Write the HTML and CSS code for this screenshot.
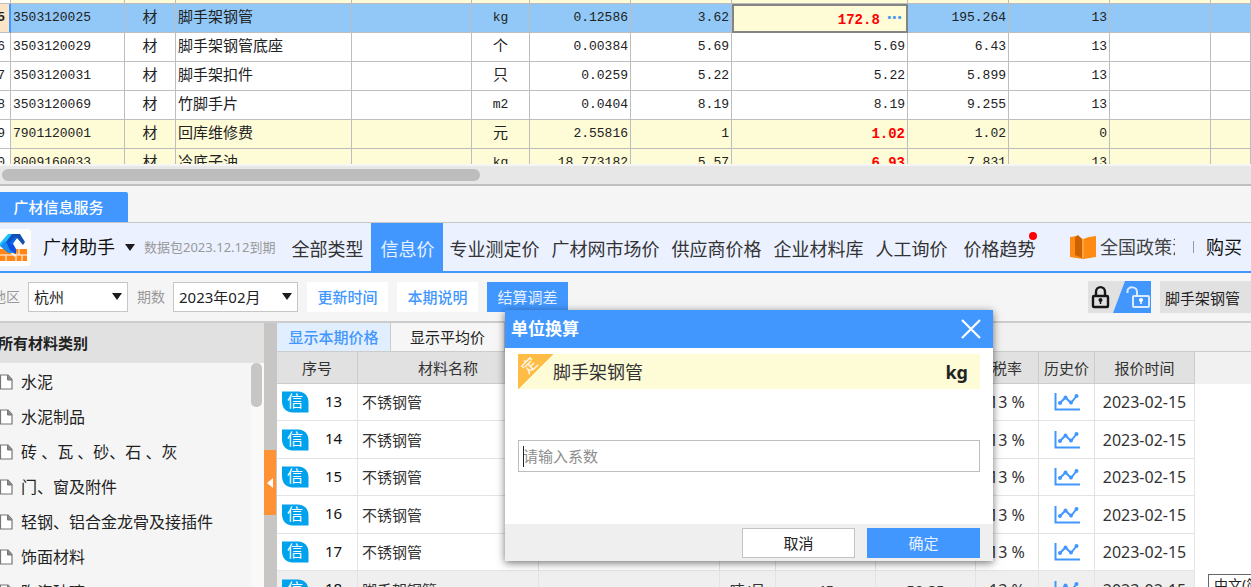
FILE: index.html
```html
<!DOCTYPE html>
<html lang="zh-CN">
<head>
<meta charset="utf-8">
<title>广材助手</title>
<link rel="stylesheet" href="styles.css">
</head>
<body>
<svg class="defs" aria-hidden="true">
  <symbol id="i-xin" viewBox="0 0 28 22"><path d="M1 0.500H17C24 1 27.500 5 27.500 12V21.500H11C4 21 1 16 1 10Z" fill="#00a2ee"/></symbol>
  <symbol id="i-chart" viewBox="0 0 26 20"><path d="M1.500 1V17.500H26" fill="none" stroke="#4297ff" stroke-width="2"/><path d="M6 11L11.500 5.500L17 11L22.500 4" fill="none" stroke="#4297ff" stroke-width="2"/><g fill="#4297ff"><circle cx="6" cy="11" r="2"/><circle cx="11.500" cy="5.500" r="2"/><circle cx="17" cy="10.500" r="2"/><circle cx="22.500" cy="4" r="2"/></g></symbol>
  <symbol id="i-doc" viewBox="0 0 13 16"><path d="M0.500 1H8L12 5.500V15H0.500Z" fill="#fff" stroke="#777" stroke-width="1.200"/><path d="M7.500 1V6H12" fill="#888" stroke="#777"/></symbol>
</svg>

<section class="sheet">
  <table class="grid">
    <colgroup><col class="w-no"><col class="w-code"><col class="w-kind"><col class="w-name"><col class="w-spec"><col class="w-unit"><col class="w-num"><col class="w-num"><col class="w-market"><col class="w-num"><col class="w-num"><col class="w-num"><col></colgroup>
    <tbody>
      <tr class="hl"><td></td><td></td><td></td><td></td><td></td><td></td><td></td><td></td><td></td><td></td><td></td><td></td><td></td></tr>
      <tr class="sel"><td class="no"><span><b>15</b></span></td><td>3503120025</td><td class="c">材</td><td class="zh">脚手架钢管</td><td></td><td class="c u">kg</td><td class="r">0.12586</td><td class="r">3.62</td><td class="r edit"><b>172.8</b><button class="more" aria-label="更多">···</button></td><td class="r">195.264</td><td class="r">13</td><td></td><td></td></tr>
      <tr><td class="no"><span>16</span></td><td>3503120029</td><td class="c">材</td><td class="zh">脚手架钢管底座</td><td></td><td class="c">个</td><td class="r">0.00384</td><td class="r">5.69</td><td class="r">5.69</td><td class="r">6.43</td><td class="r">13</td><td></td><td></td></tr>
      <tr><td class="no"><span>17</span></td><td>3503120031</td><td class="c">材</td><td class="zh">脚手架扣件</td><td></td><td class="c">只</td><td class="r">0.0259</td><td class="r">5.22</td><td class="r">5.22</td><td class="r">5.899</td><td class="r">13</td><td></td><td></td></tr>
      <tr><td class="no"><span>18</span></td><td>3503120069</td><td class="c">材</td><td class="zh">竹脚手片</td><td></td><td class="c u">m2</td><td class="r">0.0404</td><td class="r">8.19</td><td class="r">8.19</td><td class="r">9.255</td><td class="r">13</td><td></td><td></td></tr>
      <tr class="hl"><td class="no"><span>19</span></td><td>7901120001</td><td class="c">材</td><td class="zh">回库维修费</td><td></td><td class="c">元</td><td class="r">2.55816</td><td class="r">1</td><td class="r red">1.02</td><td class="r">1.02</td><td class="r">0</td><td></td><td></td></tr>
      <tr class="hl"><td class="no"><span>20</span></td><td>8009160033</td><td class="c">材</td><td class="zh">冷底子油</td><td></td><td class="c u">kg</td><td class="r">18.773182</td><td class="r">5.57</td><td class="r red">6.93</td><td class="r">7.831</td><td class="r">13</td><td></td><td></td></tr>
    </tbody>
  </table>
</section>
<div class="hscroll"><div class="hthumb"></div></div>

<div class="paneltabs"><button class="paneltab">广材信息服务</button></div>

<header class="nav">
  <svg class="logo" viewBox="0 0 31 37"><rect x="-6" width="37" height="37" rx="4" fill="#fff"/><path d="M0 20H8L15 28L19 20H27V32H0Z" fill="#ff8617"/><path d="M9 20H20L15 26Z" fill="#ff8617"/><path d="M0 26H27M6 26V32M12 20V26M19 20V26M16 26V32M22 26V32" stroke="#fff" stroke-width="1"/><path d="M0 14L8 5H15L6 17L0 17Z" fill="#22c0f5"/><path d="M0 17L5 12L11 20L16 24H8Z" fill="#1b8cf0"/><path d="M6 13L12 5H18L12 13L16 20V25L10 21Z" fill="#0b50e0"/><path d="M13 5H20L25 13L23 16L17 9L11 15L8 12Z" fill="#1450b0"/><path d="M12 16L17 9L15 8L9 14Z" fill="#0b66ea"/></svg>
  <button class="brand">广材助手<i class="caret"></i></button>
  <span class="expire">数据包2023.12.12到期</span>
  <nav class="links">
    <a href="#">全部类型</a><a href="#" class="on">信息价</a><a href="#">专业测定价</a><a href="#">广材网市场价</a><a href="#">供应商价格</a><a href="#">企业材料库</a><a href="#">人工询价</a><a href="#" class="dot">价格趋势</a>
  </nav>
  <div class="extras">
    <svg class="book" viewBox="0 0 26 24"><path d="M0 2L7 1L13 4L19 2L26 1V22L13 24L0 22Z" fill="#ff8a14"/><path d="M5 2L8 0L12 4V23L5 20Z" fill="#cc6200"/><path d="M13 4V23" stroke="#ffc070"/></svg>
    <a href="#" class="policy">全国政策法规</a>
    <i class="bar"></i>
    <a href="#" class="buy">购买</a>
  </div>
</header>

<div class="tools">
  <label class="lab area" for="area">地区</label>
  <span class="pick pick-area"><select id="area"><option>杭州</option></select><i class="caret"></i></span>
  <label class="lab" for="period">期数</label>
  <span class="pick pick-period"><select id="period"><option>2023年02月</option></select><i class="caret"></i></span>
  <div class="btns"><button>更新时间</button><button>本期说明</button><button class="primary">结算调差</button></div>
  <button class="lock" aria-label="锁定"><svg viewBox="0 0 63 32"><rect width="63" height="32" fill="#e1e1e1"/><path d="M37 0H63V32H25Z" fill="#4297ff"/><g fill="none" stroke="#161616" stroke-width="2.400"><rect x="5" y="15" width="15" height="11" rx="1"/><path d="M8 15V11C8 4.500 17 4.500 17 11V15"/></g><circle cx="12.500" cy="19" r="2" fill="#161616"/><path d="M12.500 19V23" stroke="#161616" stroke-width="1.500"/><g fill="none" stroke="#dcebff" stroke-width="2"><rect x="45" y="15" width="16" height="11" rx="1"/><path d="M39.500 12V10C39.500 5 49 5 49 11V15"/></g><circle cx="53" cy="19" r="2" fill="#fff"/><path d="M53 19V23" stroke="#fff" stroke-width="1.500"/></svg></button>
  <input class="search" aria-label="搜索材料" value="脚手架钢管">
</div>

<main class="work">
  <aside class="side">
    <h2>所有材料类别</h2>
    <div class="treebox">
      <ul class="tree">
        <li><svg><use href="#i-doc"/></svg>水泥</li>
        <li><svg><use href="#i-doc"/></svg>水泥制品</li>
        <li><svg><use href="#i-doc"/></svg>砖 、瓦 、砂、石 、灰</li>
        <li><svg><use href="#i-doc"/></svg>门、窗及附件</li>
        <li><svg><use href="#i-doc"/></svg>轻钢、铝合金龙骨及接插件</li>
        <li><svg><use href="#i-doc"/></svg>饰面材料</li>
        <li><svg><use href="#i-doc"/></svg>陶瓷玻璃</li>
      </ul>
      <div class="vtrack"><div class="vthumb"></div></div>
    </div>
  </aside>
  <div class="split"><button aria-label="收起"></button></div>
  <section class="list">
    <div class="subtabs"><button class="on">显示本期价格</button><button>显示平均价</button></div>
    <table class="prices">
      <colgroup><col class="p-no"><col class="p-name"><col class="p-name"><col class="p-unit"><col class="p-price"><col class="p-price"><col class="p-tax"><col class="p-unit"><col class="p-price"><col></colgroup>
      <thead><tr><th>序号</th><th>材料名称</th><th></th><th></th><th></th><th></th><th>税率</th><th>历史价</th><th>报价时间</th><th class="rest"></th></tr></thead>
      <tbody>
        <tr><td class="n"><span class="xin"><svg><use href="#i-xin"/></svg><em>信</em></span>13</td><td class="l">不锈钢管</td><td></td><td></td><td></td><td></td><td class="d">13 %</td><td><svg class="chart"><use href="#i-chart"/></svg></td><td class="d">2023-02-15</td><td class="rest"></td></tr>
        <tr><td class="n"><span class="xin"><svg><use href="#i-xin"/></svg><em>信</em></span>14</td><td class="l">不锈钢管</td><td></td><td></td><td></td><td></td><td class="d">13 %</td><td><svg class="chart"><use href="#i-chart"/></svg></td><td class="d">2023-02-15</td><td class="rest"></td></tr>
        <tr><td class="n"><span class="xin"><svg><use href="#i-xin"/></svg><em>信</em></span>15</td><td class="l">不锈钢管</td><td></td><td></td><td></td><td></td><td class="d">13 %</td><td><svg class="chart"><use href="#i-chart"/></svg></td><td class="d">2023-02-15</td><td class="rest"></td></tr>
        <tr><td class="n"><span class="xin"><svg><use href="#i-xin"/></svg><em>信</em></span>16</td><td class="l">不锈钢管</td><td></td><td></td><td></td><td></td><td class="d">13 %</td><td><svg class="chart"><use href="#i-chart"/></svg></td><td class="d">2023-02-15</td><td class="rest"></td></tr>
        <tr><td class="n"><span class="xin"><svg><use href="#i-xin"/></svg><em>信</em></span>17</td><td class="l">不锈钢管</td><td></td><td></td><td></td><td></td><td class="d">13 %</td><td><svg class="chart"><use href="#i-chart"/></svg></td><td class="d">2023-02-15</td><td class="rest"></td></tr>
        <tr class="alt"><td class="n"><span class="xin"><svg><use href="#i-xin"/></svg><em>信</em></span>18</td><td class="l">脚手架钢管</td><td></td><td>吨/月</td><td>45</td><td>50.85</td><td class="d">13 %</td><td><svg class="chart"><use href="#i-chart"/></svg></td><td class="d">2023-02-15</td><td class="rest"></td></tr>
      </tbody>
    </table>
  </section>
</main>

<div class="dialog" role="dialog" aria-labelledby="dlg-title">
  <div class="dlg-head"><h2 id="dlg-title">单位换算</h2><button aria-label="关闭"><svg viewBox="0 0 20 20"><path d="M1 1L19 19M19 1L1 19" stroke="#fff" stroke-width="2.200"/></svg></button></div>
  <div class="dlg-body">
    <div class="banner"><span class="mark"><em>定</em></span><span>脚手架钢管</span><b>kg</b></div>
    <div class="field"><input aria-label="系数" placeholder="请输入系数"></div>
  </div>
  <div class="dlg-foot"><button>取消</button><button class="ok">确定</button></div>
</div>
<div class="ime">中文(简体)</div>
</body>
</html>
```
FILE: styles.css
```css
* { box-sizing: border-box; }
html, body { height: 100%; }
body {
  margin: 0; overflow: hidden; position: relative;
  display: flex; flex-direction: column;
  background: #f5f5f5; color: #222;
  font: 15px/20px "Noto Sans", "Noto Sans CJK SC", sans-serif;
}
.defs { position: absolute; width: 0; height: 0; }
button, input, select { font: inherit; color: inherit; border: 0; padding: 0; margin: 0; background: none; border-radius: 0; }
a { color: inherit; text-decoration: none; }
h2 { margin: 0; }
em, i { font-style: normal; }
table { border-collapse: separate; border-spacing: 0; table-layout: fixed; width: 100%; }
.caret { border: 5px solid transparent; border-top: 7px solid #1c1c1c; border-bottom: 0; }

/* upper sheet */
.sheet { height: 164px; flex: none; overflow: hidden; background: #fff; display: flex; align-items: flex-start; margin-bottom: 2px; }
.grid { margin-top: -25px; font: 13px/20px "Liberation Mono", "Noto Sans CJK SC", monospace; }
.grid td { height: 29px; padding: 0 2px; border-right: 1px solid #bdbdbd; border-bottom: 1px solid #bdbdbd; white-space: nowrap; overflow: hidden; }
.grid .c { text-align: center; font-size: 15px; }
.grid .u { font-size: 13px; }
.grid .zh { font-size: 15px; }
.grid .c:not(.u), .grid .zh { padding-top: 2px; }
.grid .r { text-align: right; }
.grid .no { padding: 0 5px 0 0; }
.no span { display: flex; justify-content: flex-end; }
.hl td { background: #fefbd7; }
.hl .no, .hl td:first-child { background: #fff; }
.sel td { background: #91c8f7; }
.sel .no { background: #fde4c6; border-right: 2px solid #4297ff; padding-right: 4px; }
.grid .red { color: #f00; font-size: 14px; font-weight: bold; }
.grid .edit { background: #fefbd7; border: 2px solid #848484; color: #f00; font-size: 14px; line-height: 16px; padding: 0 4px; }
.more { margin-left: 7px; color: #4f9be6; font: bold 18px/14px "Noto Sans", sans-serif; }
.w-no { width: 11px; } .w-code { width: 114px; } .w-kind { width: 51px; } .w-name { width: 176px; }
.w-spec { width: 120px; } .w-unit { width: 58px; } .w-num { width: 101px; } .w-market { width: 176px; }
.hscroll { flex: none; height: 20px; padding: 3px 2px; background: #e7e7e7; border-bottom: 2px solid #bfbfbf; }
.hthumb { width: 478px; height: 12px; border-radius: 6px; background: #bdbdbd; }

.paneltabs { flex: none; padding-top: 6px; display: flex; border-bottom: 1px solid #c8c8c8; }
.paneltab { height: 30px; width: 128px; padding-right: 11px; background: #4297ff; color: #fff; font-weight: 500; border-radius: 0 2px 0 0; }

/* navigation */
.nav { flex: none; height: 50px; display: flex; align-items: center; background: #ebf1ff; border-bottom: 2px solid #4297ff; white-space: nowrap; }
.logo { width: 31px; height: 37px; flex: none; }
.brand { display: flex; align-items: center; gap: 10px; margin-left: 12px; font-size: 18px; color: #111; }
.expire { margin-left: 9px; font-size: 13px; color: #999; }
.links { display: flex; align-self: stretch; margin-left: 10px; font-size: 18px; color: #333; }
.links a { display: flex; align-items: center; padding: 4px 6px 0; }
.links a:first-child { padding-right: 8px; }
.links .on { background: #4297ff; color: #e6f1ff; padding: 4px 9px 0; }
.links .dot { position: relative; margin-left: 4px; }
.links .dot::after { content: ""; position: absolute; right: 4px; top: 9px; width: 8px; height: 8px; border-radius: 50%; background: #f00; }
.extras { display: flex; align-items: center; margin-left: auto; padding-right: 9px; font-size: 18px; }
.book { width: 26px; height: 24px; margin-right: 4px; }
.policy { width: 75px; overflow: hidden; color: #444; }
.bar { width: 1px; height: 12px; background: #999; margin: 0 12px 0 18px; }
.buy { color: #111; }

/* filter bar */
.tools { flex: none; height: 50px; display: flex; align-items: center; border-bottom: 2px solid #ccc; overflow: hidden; }
.lab { color: #999; font-size: 14px; margin-right: 8px; }
.area { margin-left: -8px; }
.pick { position: relative; height: 30px; border: 1px solid #c6c6c6; background: #fff; margin-right: 9px; }
.pick select { appearance: none; width: 100%; height: 28px; padding-left: 5px; }
.pick .caret { position: absolute; right: 5px; top: 10px; pointer-events: none; }
.pick-area { width: 100px; } .pick-period { width: 125px; }
.btns { display: flex; gap: 9px; }
.btns button { width: 81px; height: 30px; background: #fff; color: #4297ff; font-weight: 500; }
.btns .primary { background: #4297ff; color: #e6f1ff; font-weight: 400; }
.lock { width: 63px; height: 32px; margin-left: auto; margin-right: 9px; flex: none; }
.lock svg { display: block; width: 63px; height: 32px; }
.search { width: 91px; height: 32px; padding-left: 5px; background: #e1e1e1; }

/* lower area */
.work { flex: 1; min-height: 0; display: flex; overflow: hidden; }
.side { width: 264px; flex: none; display: flex; flex-direction: column; }
.side h2 { flex: none; height: 40px; margin-left: -2px; font-size: 15px; line-height: 40px; background: #e1e1e1; }
.treebox { flex: 1; display: flex; min-height: 0; }
.tree { flex: 1; margin: 0; padding: 1px 0; list-style: none; font-size: 16px; white-space: nowrap; }
.tree li { height: 35px; display: flex; align-items: center; gap: 8px; white-space: pre; }
.tree svg { width: 13px; height: 16px; }
.vtrack { width: 13px; padding-right: 2px; background: #f9f9f9; }
.vthumb { width: 11px; height: 44px; border-radius: 5px; background: #c6c6c6; }
.split { width: 13px; flex: none; background: #c8c6c4; }
.split button { display: flex; align-items: center; justify-content: center; width: 12px; height: 65px; margin-top: 127px; background: #ff9235; }
.split button::before { content: ""; border: 5px solid transparent; border-right: 6px solid #fff; border-left: 0; }
.list { flex: 1; min-width: 0; background: #fff; }
.subtabs { display: flex; height: 29px; background: #f1f1f1; border-bottom: 1px solid #ccc; }
.subtabs button { width: 114px; border-right: 1px solid #ccc; background: #f6f6f6; }
.subtabs .on { color: #4297ff; background: #e1eefe; font-weight: 500; }
.prices { color: #333; }
.prices th { height: 32px; padding: 0; background: #e1e1e1; font-weight: 400; border-right: 1px solid #ccc; border-bottom: 1px solid #ccc; }
.prices td { height: 37px; padding: 0; text-align: center; border-right: 1px solid #e3e3e3; border-bottom: 1px solid #e3e3e3; overflow: hidden; white-space: nowrap; }
.prices tr:nth-child(even) td { height: 38px; }
.prices .l { text-align: left; padding-left: 4px; }
.prices .d { font-size: 16px; }
.prices .alt td { background: #efefef; }
.prices th.rest { background: #f1f1f1; border: 0; }
.prices td.rest { background: #fff; border: 0; }
.prices .n { text-align: left; padding-left: 4px; color: #111; }
.xin { display: inline-grid; width: 28px; height: 22px; margin-right: 16px; vertical-align: middle; }
.xin > * { grid-area: 1 / 1; }
.xin svg { width: 28px; height: 22px; }
.xin em { color: #fff; font-size: 16px; line-height: 21px; text-align: center; }
.chart { width: 26px; height: 20px; display: block; margin: 0 auto; }
.p-no { width: 81px; } .p-name { width: 181px; } .p-unit { width: 56px; } .p-price { width: 100px; } .p-tax { width: 63px; }

/* dialog floating over the lists */
.dialog { position: absolute; left: 505px; top: 310px; width: 488px; background: #fff; box-shadow: 0 2px 8px rgba(0,0,0,.55); }
.dlg-head { height: 38px; display: flex; align-items: center; justify-content: space-between; padding: 0 12px 0 6px; background: #4297ff; color: #fff; }
.dlg-head h2 { font-size: 17px; }
.dlg-head svg { display: block; width: 20px; height: 20px; }
.dlg-body { padding: 6px 13px 52px; }
.banner { height: 35px; display: flex; align-items: center; padding-right: 12px; background: #fefbd7; font-size: 18px; color: #333; }
.banner b { margin-left: auto; color: #222; }
.mark { width: 35px; height: 35px; flex: none; background: linear-gradient(135deg, #ffbd45 50%, transparent 50%); color: #fff; font-size: 15px; line-height: 16px; }
.mark em { display: block; width: 22px; height: 22px; line-height: 22px; text-align: center; transform: rotate(-45deg); }
.field { position: relative; margin-top: 51px; }
.field::before { content: ""; position: absolute; left: 5px; top: 6px; width: 1px; height: 21px; background: #222; }
.field input { display: block; width: 100%; height: 32px; border: 1px solid #bdbdbd; padding-left: 4px; background: #fff; }
.field input::placeholder { color: #8e8e8e; opacity: 1; }
.dlg-foot { height: 37px; display: flex; justify-content: flex-end; align-items: center; gap: 12px; padding: 0 13px; background: #efefef; }
.dlg-foot button { width: 113px; height: 30px; background: #fff; border: 1px solid #c4c4c4; }
.dlg-foot .ok { background: #4297ff; border-color: #4297ff; color: #e6f1ff; }
.ime { position: absolute; right: 0; bottom: 0; width: 43px; height: 13px; padding-left: 5px; overflow: hidden; white-space: nowrap; background: #fff; border: 1px solid #666; border-width: 1px 0 0 1px; font-size: 14px; line-height: 20px; }
```
